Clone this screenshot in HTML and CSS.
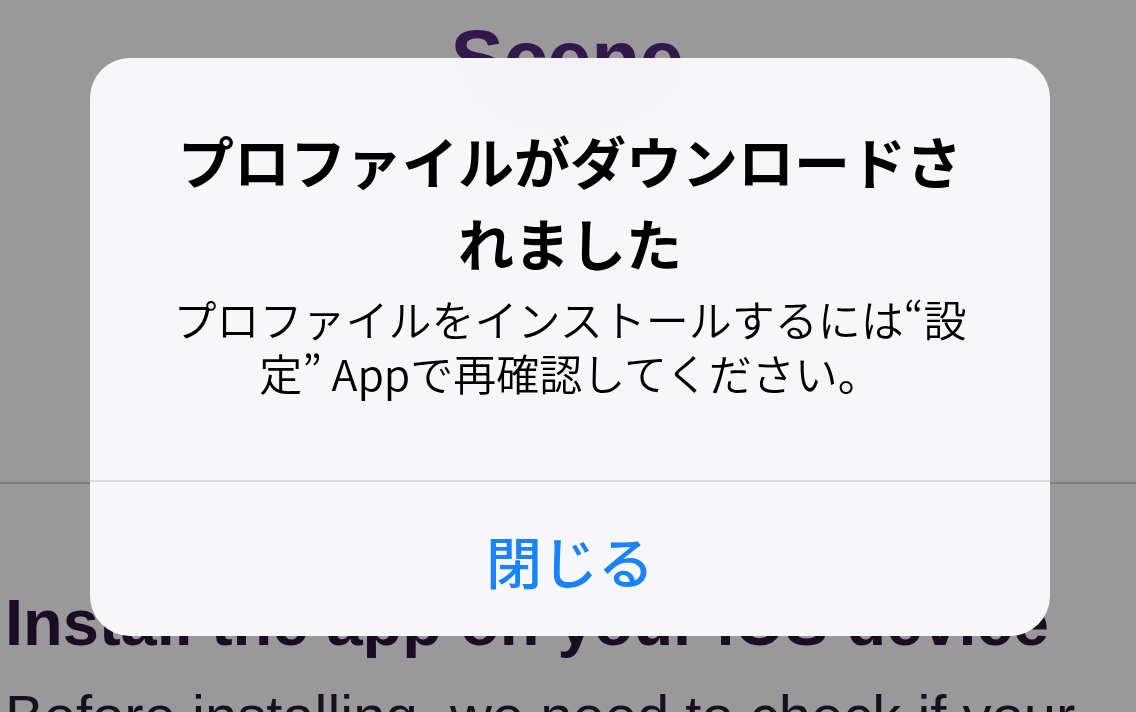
FILE: index.html
```html
<!DOCTYPE html>
<html lang="ja">
<head>
    <meta charset="UTF-8">
    <meta name="viewport" content="width=device-width, initial-scale=1.0">
    <title>Scene</title>
    <link rel="stylesheet" href="styles.css">
</head>
<body>
    <main class="page">
        <header class="page-header">
            <h1 class="brand">Scene</h1>
        </header>
        <section class="install">
            <h2>Install the app on your iOS device</h2>
            <p>Before installing, we need to check if your device is supported.</p>
        </section>
    </main>

    <!-- iOS system alert over the page -->
    <div class="dim"></div>
    <div class="alert" role="alertdialog" aria-labelledby="alertTitle">
        <div class="alert-body">
            <h3 id="alertTitle" class="alert-title">プロファイルがダウンロードされました</h3>
            <p class="alert-message">プロファイルをインストールするには“設定” Appで再確認してください。</p>
        </div>
        <button class="alert-button" type="button">閉じる</button>
    </div>
</body>
</html>
```

FILE: styles.css
```css
html, body {
    margin: 0;
    padding: 0;
    height: 100%;
    overflow: hidden;
}
body {
    background-color: #ffffff;
    font-family: "Liberation Sans", Arial, sans-serif;
}
.page {
    padding: 0 5px;
}
.page-header {
    padding: 19px 0 0;
    height: 463px;
    border-bottom: 2px solid #d0d0d0;
    margin: 0 -5px;
    text-align: center;
}
.brand {
    margin: 0;
    padding-right: 2px;
    font-size: 80px;
    line-height: 1;
    font-weight: 700;
    color: #55297f;
    letter-spacing: -0.5px;
}
.install h2 {
    margin: 100px 0 0;
    font-size: 65px;
    line-height: 1.2;
    font-weight: 700;
    color: #2e1540;
    white-space: nowrap;
}
.install p {
    margin: 16px 0 0;
    font-size: 58px;
    line-height: 1.3;
    color: #2a1a36;
}
.dim {
    position: fixed;
    inset: 0;
    background-color: rgba(0, 0, 0, 0.4);
}
.alert {
    position: fixed;
    left: 90px;
    top: 58px;
    width: 960px;
    height: 578px;
    border-radius: 40px;
    overflow: hidden;
    display: flex;
    flex-direction: column;
    background:
        radial-gradient(ellipse 150px 100px at 50% 0, rgba(110, 70, 150, 0.03), rgba(110, 70, 150, 0)),
        #f7f7f9;
    font-family: "Noto Sans CJK JP", "Liberation Sans", sans-serif;
    text-align: center;
}
.alert-body {
    flex: 1;
    padding: 61px 76px 0;
}
.alert-title {
    margin: 0;
    font-size: 56px;
    line-height: 82px;
    font-weight: 700;
    color: #000000;
}
.alert-message {
    margin: 8px 0 0;
    font-size: 43px;
    line-height: 54px;
    font-weight: 350;
    color: #000000;
}
.alert-button {
    height: 156px;
    border: 0;
    border-top: 2px solid #dadade;
    background: transparent;
    font-family: inherit;
    font-size: 56px;
    font-weight: 500;
    color: #1a82fb;
    padding: 0;
}
```
